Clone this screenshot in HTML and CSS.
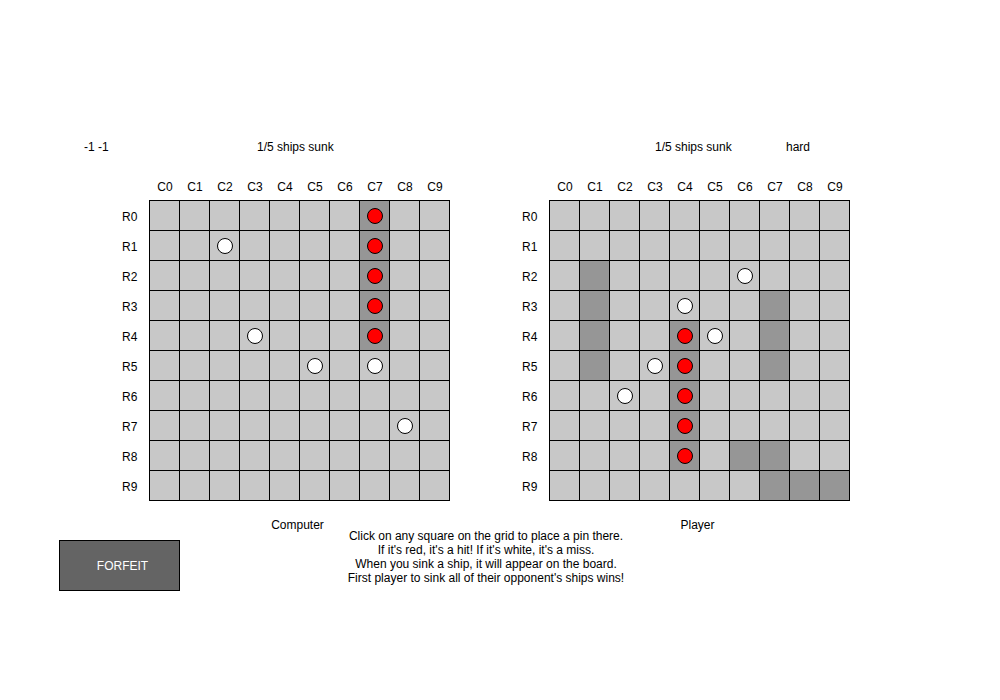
FILE: index.html
```html
<!DOCTYPE html>
<html lang="en">
<head>
    <meta charset="UTF-8">
    <title>Battleship</title>
    <link rel="stylesheet" href="styles.css">
</head>
<body>

<div class="status">
    <span class="coords">-1 -1</span>
    <span class="sunk-left">1/5 ships sunk</span>
    <span class="sunk-right">1/5 ships sunk</span>
    <span class="level">hard</span>
</div>

<div class="boards">
    <div class="board">
        <div class="col-labels" id="computerCols"></div>
        <div class="board-body">
            <div class="row-labels" id="computerRows"></div>
            <div class="grid" id="computerGrid"></div>
        </div>
        <div class="caption">Computer</div>
    </div>
    <div class="board">
        <div class="col-labels" id="playerCols"></div>
        <div class="board-body">
            <div class="row-labels" id="playerRows"></div>
            <div class="grid" id="playerGrid"></div>
        </div>
        <div class="caption">Player</div>
    </div>
</div>

<div class="footer">
    <button class="forfeit">FORFEIT</button>
    <div class="help">
        Click on any square on the grid to place a pin there.<br>
        If it's red, it's a hit! If it's white, it's a miss.<br>
        When you sink a ship, it will appear on the board.<br>
        First player to sink all of their opponent's ships wins!
    </div>
</div>

<script>
    // ship cells and pins, as "row,col"
    let boards = {
        computer: {
            ships: ["0,7", "1,7", "2,7", "3,7", "4,7"],
            hits: ["0,7", "1,7", "2,7", "3,7", "4,7"],
            misses: ["1,2", "4,3", "5,5", "5,7", "7,8"]
        },
        player: {
            ships: ["2,1", "3,1", "4,1", "5,1",
                    "4,4", "5,4", "6,4", "7,4", "8,4",
                    "3,7", "4,7", "5,7",
                    "8,6", "8,7",
                    "9,7", "9,8", "9,9"],
            hits: ["4,4", "5,4", "6,4", "7,4", "8,4"],
            misses: ["2,6", "3,4", "4,5", "5,3", "6,2"]
        }
    };

    function drawBoard(name) {
        let data = boards[name];
        let cols = document.getElementById(name + "Cols");
        let rows = document.getElementById(name + "Rows");
        let grid = document.getElementById(name + "Grid");

        for (let i = 0; i < 10; i++) {
            cols.innerHTML += `<span class="col-label">C${i}</span>`;
            rows.innerHTML += `<span class="row-label">R${i}</span>`;
        }

        for (let r = 0; r < 10; r++) {
            for (let c = 0; c < 10; c++) {
                let key = r + "," + c;
                let cell = document.createElement("div");
                cell.className = "cell" + (data.ships.includes(key) ? " ship" : "");
                if (data.hits.includes(key)) {
                    cell.innerHTML = '<span class="pin hit"></span>';
                } else if (data.misses.includes(key)) {
                    cell.innerHTML = '<span class="pin miss"></span>';
                }
                grid.appendChild(cell);
            }
        }
    }

    drawBoard("computer");
    drawBoard("player");
</script>

</body>
</html>
```

FILE: styles.css
```css
body {
    margin: 0;
    background: #fff;
    color: #000;
    font-family: "Liberation Sans", Arial, sans-serif;
    font-size: 12px;
    line-height: 14px;
}
.status {
    display: flex;
    padding-top: 140px;
    padding-left: 84px;
    height: 14px;
}
.coords { width: 173px; }
.sunk-left { width: 398px; }
.sunk-right { width: 131px; }

.boards {
    display: flex;
    gap: 50px;
    padding-left: 100px;
    margin-top: 26px;
}
.board { width: 350px; }
.col-labels {
    display: flex;
    padding-left: 50px;
    height: 14px;
    margin-bottom: 6px;
}
.col-label {
    width: 30px;
    text-align: center;
}
.board-body { display: flex; }
.row-labels {
    width: 49px;
    display: flex;
    flex-direction: column;
}
.row-label {
    height: 30px;
    padding-top: 10px;
    padding-left: 22px;
    box-sizing: border-box;
}
.grid {
    display: grid;
    grid-template-columns: repeat(10, 29px);
    grid-auto-rows: 29px;
    gap: 1px;
    padding: 1px;
    background: #000;
}
.cell {
    background: #c8c8c8;
    display: flex;
    align-items: center;
    justify-content: center;
}
.cell.ship { background: #969696; }
.pin {
    width: 16px;
    height: 16px;
    border-radius: 50%;
    border: 1px solid #000;
    box-sizing: border-box;
}
.hit { background: #ff0000; }
.miss { background: #fff; }
.caption {
    margin-top: 17px;
    margin-left: 47px;
    width: 301px;
    text-align: center;
}

.footer {
    display: flex;
    margin-top: -3px;
}
.forfeit {
    margin-left: 59px;
    margin-top: 11px;
    width: 121px;
    height: 51px;
    box-sizing: border-box;
    padding: 0 0 0 6px;
    background: #646464;
    color: #fff;
    border: 1px solid #000;
    font: inherit;
    cursor: pointer;
}
.help {
    width: 612px;
    text-align: center;
}
```
